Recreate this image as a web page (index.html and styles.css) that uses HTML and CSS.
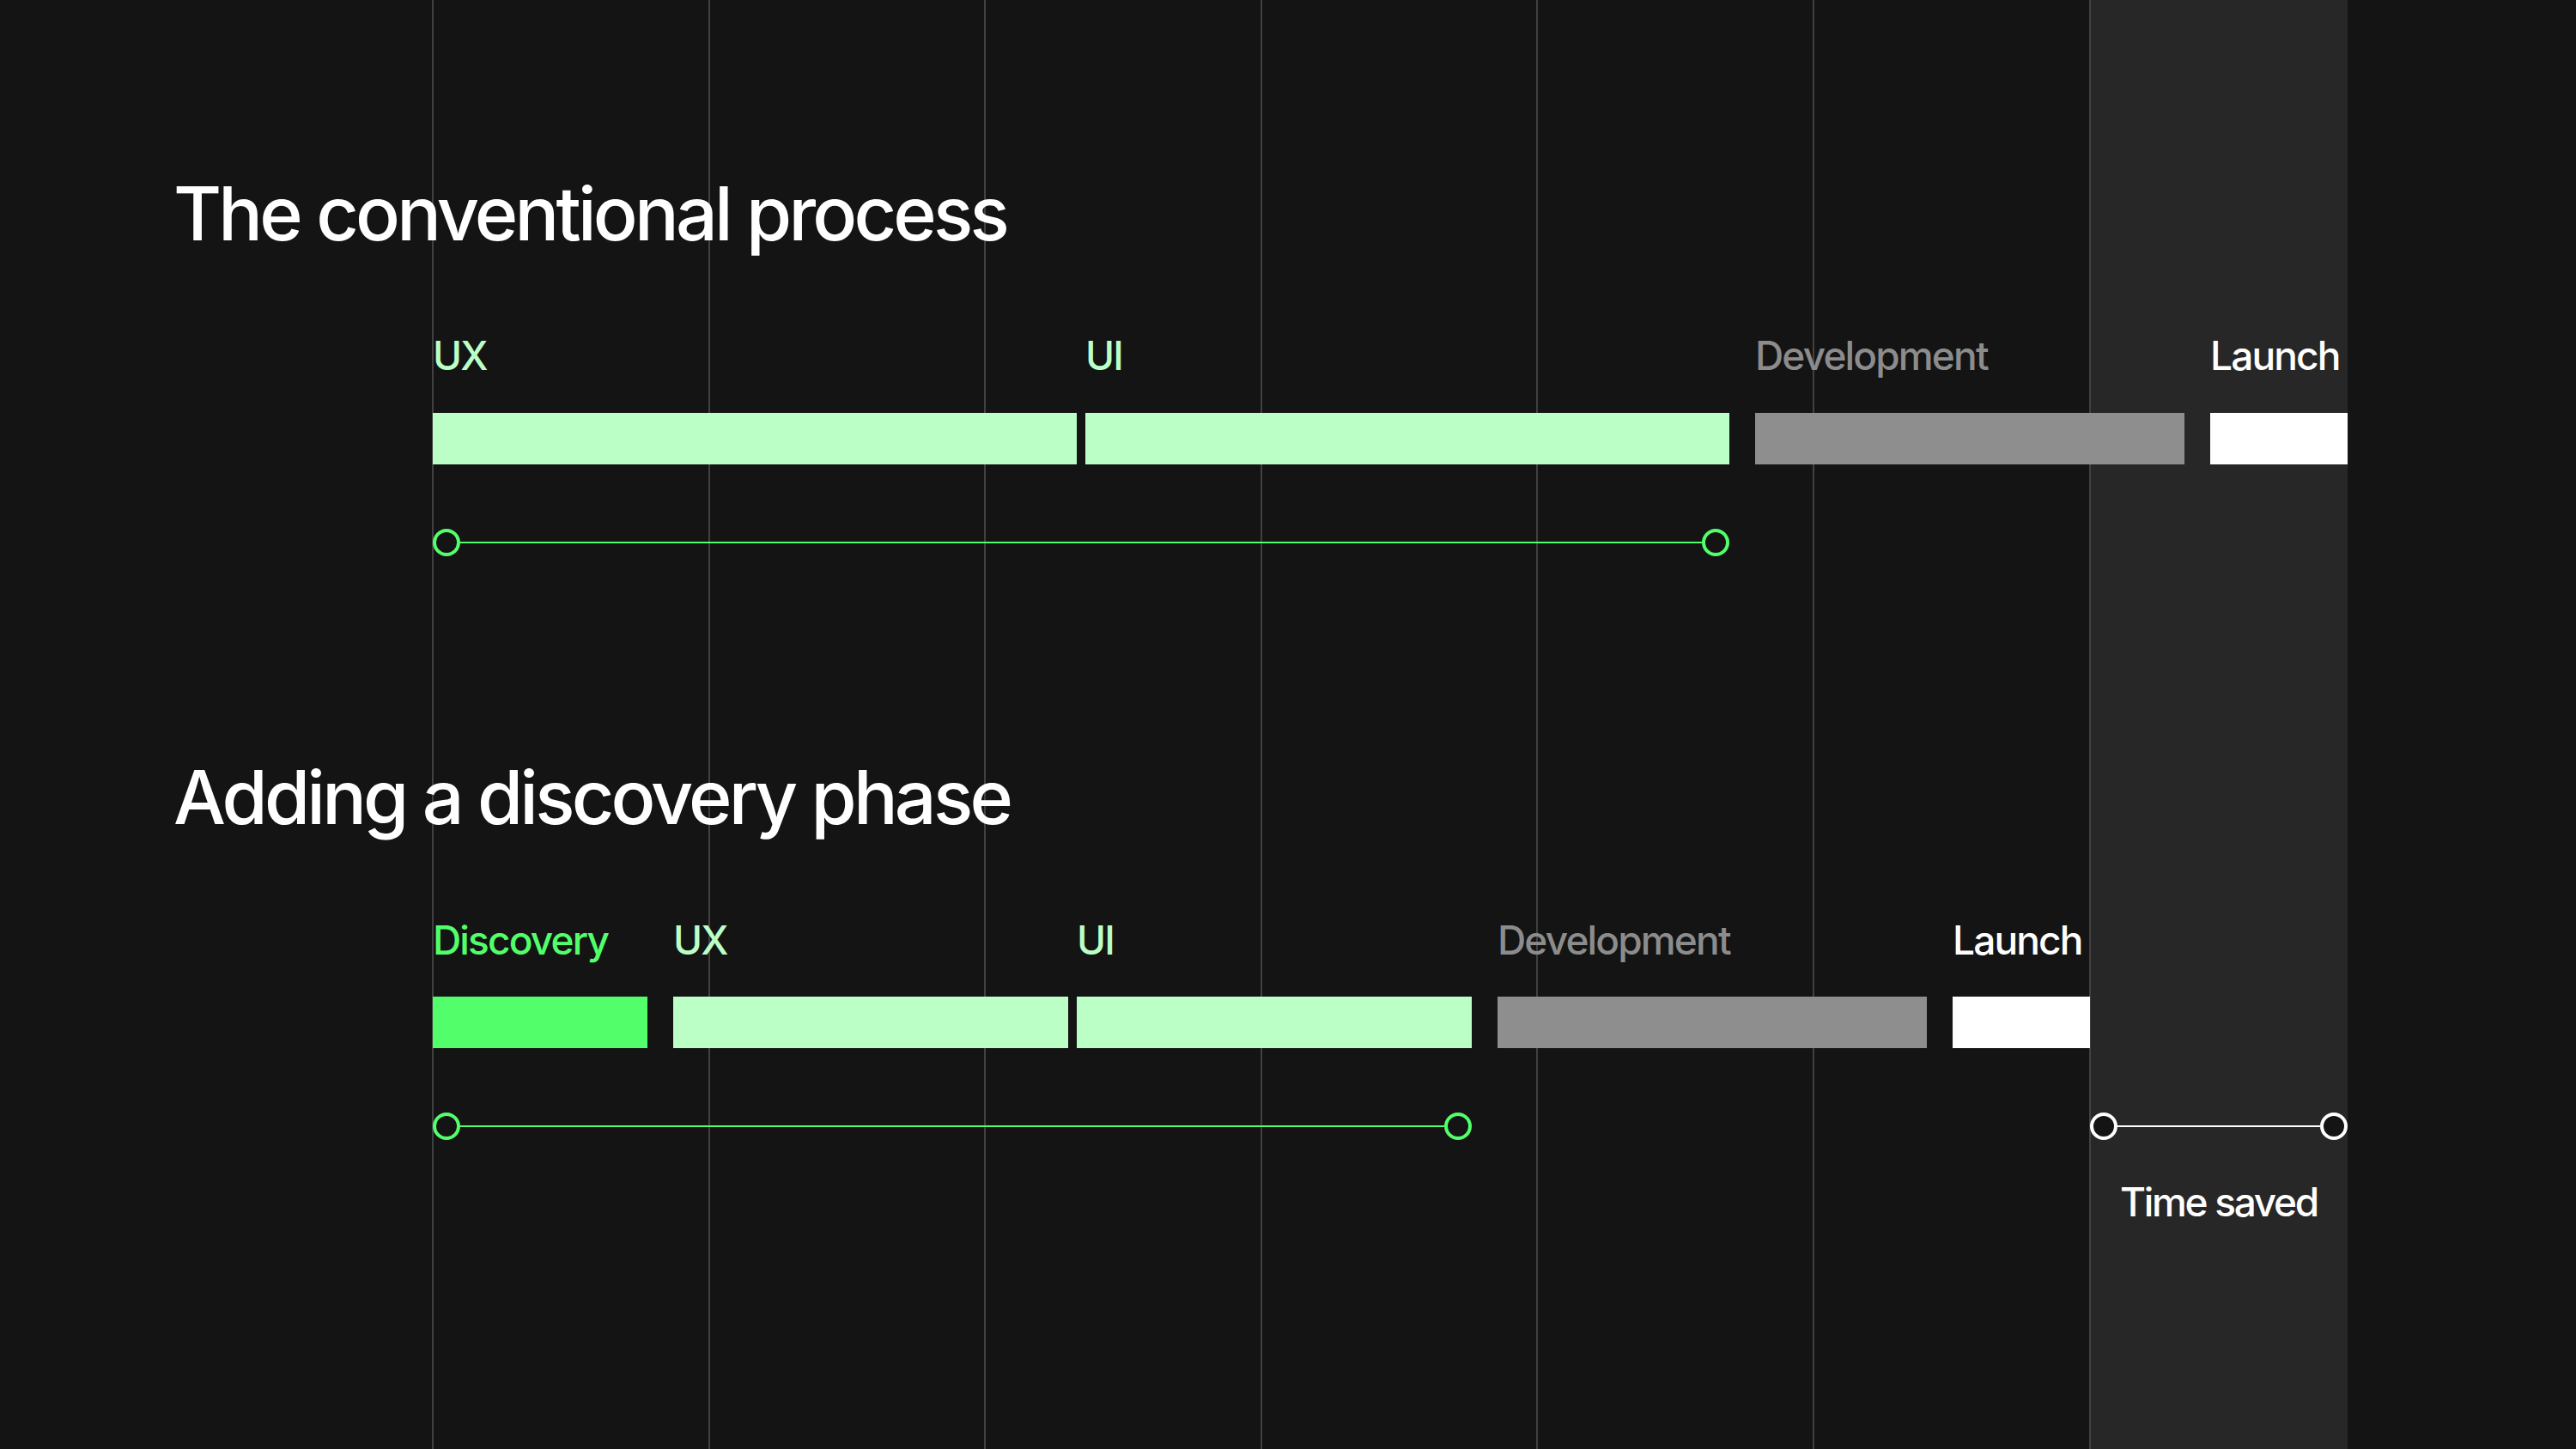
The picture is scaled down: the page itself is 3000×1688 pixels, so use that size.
FILE: index.html
```html
<!DOCTYPE html>
<html lang="en">
<head>
<meta charset="utf-8">
<title>Process timeline</title>
<link rel="stylesheet" href="styles.css">
</head>
<body>
<main class="page">
  <section class="process">
    <h2 class="title">The conventional process</h2>
    <div class="chart">
      <div class="phases">
        <div class="phase design pair" style="width:750px"><span class="label">UX</span><div class="bar"></div></div>
        <div class="phase design" style="width:750px"><span class="label">UI</span><div class="bar"></div></div>
        <div class="phase dev" style="width:500px"><span class="label">Development</span><div class="bar"></div></div>
        <div class="phase launch" style="width:160px"><span class="label">Launch</span><div class="bar"></div></div>
      </div>
      <div class="tracks">
        <div class="timeline green" style="width:1510px"><span class="dot"></span><span class="line"></span><span class="dot"></span></div>
      </div>
    </div>
  </section>

  <section class="process second">
    <h2 class="title">Adding a discovery phase</h2>
    <div class="chart">
      <div class="phases">
        <div class="phase discovery" style="width:250px"><span class="label">Discovery</span><div class="bar"></div></div>
        <div class="phase design pair" style="width:460px"><span class="label">UX</span><div class="bar"></div></div>
        <div class="phase design" style="width:460px"><span class="label">UI</span><div class="bar"></div></div>
        <div class="phase dev" style="width:500px"><span class="label">Development</span><div class="bar"></div></div>
        <div class="phase launch" style="width:160px"><span class="label">Launch</span><div class="bar"></div></div>
      </div>
      <div class="tracks">
        <div class="timeline green" style="width:1210px"><span class="dot"></span><span class="line"></span><span class="dot"></span></div>
        <div class="saved">
          <div class="timeline white"><span class="dot"></span><span class="line"></span><span class="dot"></span></div>
          <span class="saved-label">Time saved</span>
        </div>
      </div>
    </div>
  </section>
</main>
</body>
</html>
```

FILE: styles.css
```css
html, body {
  margin: 0;
  padding: 0;
}

body {
  width: 3000px;
  height: 1688px;
  overflow: hidden;
  background-color: #141414;
  background-image: linear-gradient(90deg,
    #141414 0, #141414 503px,
    #414141 503px, #414141 505px,
    #141414 505px, #141414 825px,
    #414141 825px, #414141 827px,
    #141414 827px, #141414 1146px,
    #414141 1146px, #414141 1148px,
    #141414 1148px, #141414 1468px,
    #414141 1468px, #414141 1470px,
    #141414 1470px, #141414 1789px,
    #414141 1789px, #414141 1791px,
    #141414 1791px, #141414 2111px,
    #414141 2111px, #414141 2113px,
    #141414 2113px, #141414 2433px,
    #414141 2433px, #414141 2435px,
    #272727 2435px, #272727 2734px,
    #141414 2734px, #141414 100%);
  font-family: "Inter", "Noto Sans", "Liberation Sans", sans-serif;
  color: #ffffff;
}

.page {
  box-sizing: border-box;
  height: 100%;
  padding: 206px 0 0 202px;
}

.title {
  margin: 0;
  font-size: 86px;
  line-height: 86px;
  font-weight: 500;
  letter-spacing: -0.044em;
  color: #ffffff;
  white-space: nowrap;
}

.second {
  margin-top: 238px;
}

.chart {
  margin-left: 302px;
  margin-top: 99px;
}

.second .chart {
  margin-top: 100px;
}

.phases {
  display: flex;
  gap: 30px;
}

.phase {
  display: flex;
  flex-direction: column;
  gap: 44px;
  flex: none;
}

.second .phase {
  gap: 43px;
}

.phase.pair {
  margin-right: -20px;
}

.label {
  font-size: 46px;
  line-height: 46px;
  font-weight: 500;
  letter-spacing: -0.04em;
  white-space: nowrap;
}

.bar {
  height: 60px;
}

.discovery .label { color: #52ff6b; }
.discovery .bar { background: #52ff6b; }
.design .label { color: #bbffc6; }
.design .bar { background: #bbffc6; }
.dev .label { color: #8c8c8c; }
.dev .bar { background: #8e8e8e; }
.launch .label { color: #ffffff; }
.launch .bar { background: #ffffff; }

.tracks {
  display: flex;
  align-items: flex-start;
  margin-top: 75px;
}

.timeline {
  display: flex;
  align-items: center;
  flex: none;
}

.dot {
  box-sizing: border-box;
  width: 32px;
  height: 32px;
  border-radius: 50%;
  border: 4px solid currentColor;
  background: #141414;
  flex: none;
}

.line {
  flex: 1;
  height: 2px;
  background: currentColor;
}

.timeline.green {
  color: #52ff6b;
}

.timeline.white {
  color: #ffffff;
  width: 300px;
}

.saved {
  margin-left: 720px;
  width: 300px;
  display: flex;
  flex-direction: column;
  align-items: center;
}

.saved-label {
  margin-top: 49px;
  font-size: 46px;
  line-height: 46px;
  font-weight: 500;
  letter-spacing: -0.05em;
  color: #ffffff;
  white-space: nowrap;
}
```
